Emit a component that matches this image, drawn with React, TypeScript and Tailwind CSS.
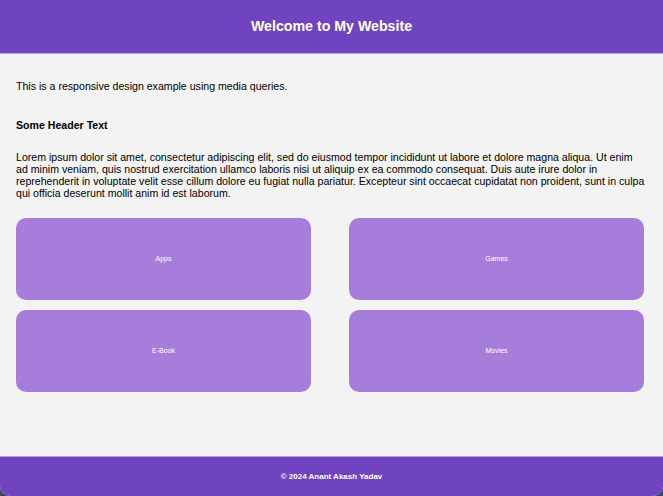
const cards = ['Apps', 'Games', 'E-Book', 'Movies'];

export default function App() {
  return (
    <div className="h-[496px] w-[663px] bg-[#3b4560]" style={{ fontFamily: '"Liberation Sans", Arial, sans-serif' }}>
      <div className="flex h-full flex-col overflow-hidden rounded-b-[10px] bg-[#f3f3f3]">
        <header className="flex h-[54px] shrink-0 items-center justify-center border-b border-[#b9a0e6] bg-[#7044c0]">
          <h1 className="text-[14.2px] font-bold text-white">Welcome to My Website</h1>
        </header>

        <main className="flex-1 px-4 text-black">
          <p className="mt-[26px] text-[10.6px] leading-[12px]">This is a responsive design example using media queries.</p>
          <h2 className="mt-[27px] text-[10.6px] font-bold leading-[12px]">Some Header Text</h2>
          <p className="mt-[20px] text-[10.6px] leading-[12px]">
            Lorem ipsum dolor sit amet, consectetur adipiscing elit, sed do eiusmod tempor incididunt ut labore et dolore magna aliqua. Ut enim ad minim veniam, quis nostrud exercitation ullamco laboris nisi ut aliquip ex ea commodo consequat. Duis aute irure dolor in reprehenderit in voluptate velit esse cillum dolore eu fugiat nulla pariatur. Excepteur sint occaecat cupidatat non proident, sunt in culpa qui officia deserunt mollit anim id est laborum.
          </p>

          <div className="mt-[19px] grid grid-cols-2 gap-x-[38px] gap-y-[10px] pr-[3px]">
            {cards.map((c) => (
              <div key={c} className="flex h-[82px] items-center justify-center rounded-[10px] bg-[#a77ddc] pt-px text-[7px] text-white">
                {c}
              </div>
            ))}
          </div>
        </main>

        <footer className="flex h-[40px] shrink-0 items-center justify-center border-t border-[#b9a0e6] bg-[#7044c0]">
          <p className="pt-px text-[8px] font-bold text-white">© 2024 Anant Akash Yadav</p>
        </footer>
      </div>
    </div>
  );
}
